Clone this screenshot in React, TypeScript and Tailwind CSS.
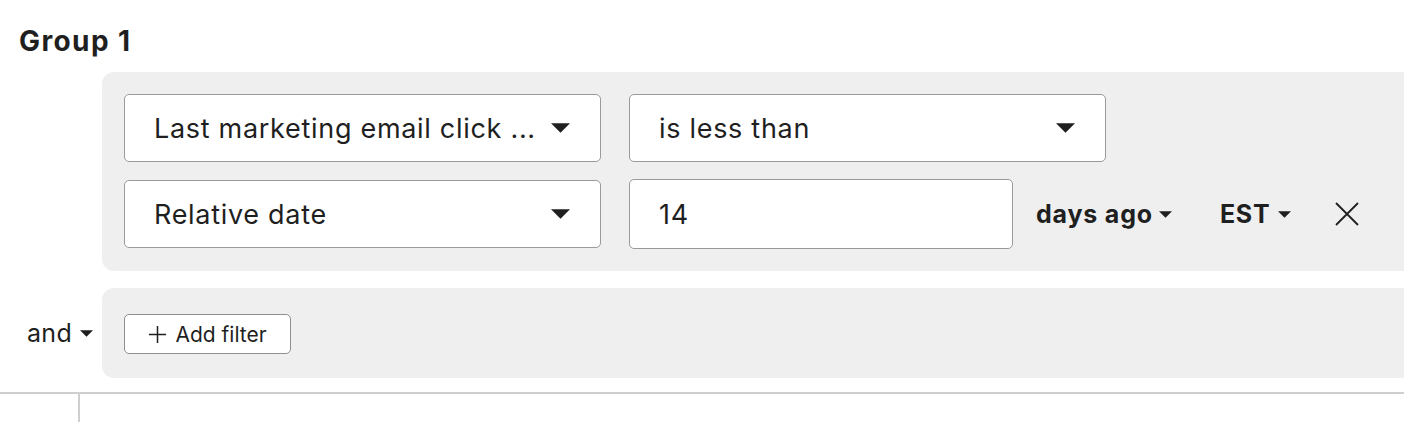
import React from "react";

const font = { fontFamily: "Inter, 'Noto Sans', sans-serif" };

function Caret({ className = "" }: { className?: string }) {
  return (
    <svg viewBox="0 0 20 10" className={className} aria-hidden>
      <path d="M0 0 L20 0 L10 10 Z" fill="currentColor" />
    </svg>
  );
}

function Select({ label, width }: { label: string; width: string }) {
  return (
    <div
      className={`${width} h-[68px] flex items-center justify-between rounded-[5px] border border-[#9a9a9a] bg-white pl-[29px] pr-[30px]`}
    >
      <span className="text-[27px] tracking-[0.7px] text-[#1f1f1f] leading-none">{label}</span>
      <Caret className="w-[19px] h-[10px] text-[#1f1f1f]" />
    </div>
  );
}

export default function App() {
  return (
    <div className="w-[1404px] h-[422px] bg-white overflow-hidden text-[#1f1f1f]" style={font}>
      <div className="pl-[19px] pt-[25px] h-[72px]">
        <h2 className="text-[28px] font-bold leading-[32px] tracking-[1.4px]">Group 1</h2>
      </div>
      <div className="flex">
        <div className="w-[102px] shrink-0" />
        <div className="flex-1 bg-[#efefef] rounded-l-[12px] pl-[22px] pt-[22px] pb-[22px] flex flex-col gap-[17px]">
          <div className="flex gap-[28px]">
            <Select label="Last marketing email click ..." width="w-[477px]" />
            <Select label="is less than" width="w-[477px]" />
          </div>
          <div className="flex items-center">
            <Select label="Relative date" width="w-[477px]" />
            <div className="ml-[28px] w-[384px] h-[70px] flex items-center rounded-[5px] border border-[#9a9a9a] bg-white pl-[29px]">
              <span className="text-[27px] tracking-[0.7px] leading-none">14</span>
            </div>
            <div className="ml-[23px] flex items-center gap-[6px]">
              <span className="text-[25px] font-bold tracking-[0.8px] leading-none">days ago</span>
              <Caret className="w-[13px] h-[7px]" />
            </div>
            <div className="ml-[48px] flex items-center gap-[7px]">
              <span className="text-[25px] font-bold tracking-[0.8px] leading-none">EST</span>
              <Caret className="w-[13px] h-[7px]" />
            </div>
            <svg viewBox="0 0 24 24" className="ml-[44px] w-[24px] h-[24px]" aria-hidden>
              <path d="M1 1 L23 23 M23 1 L1 23" stroke="#1f1f1f" strokeWidth="1.8" fill="none" />
            </svg>
          </div>
        </div>
      </div>
      <div className="flex mt-[17px]">
        <div className="w-[102px] shrink-0 flex items-center pl-[27px] gap-[8px]">
          <span className="text-[25px] tracking-[0.3px] leading-none">and</span>
          <Caret className="w-[13px] h-[7px]" />
        </div>
        <div className="flex-1 h-[90px] bg-[#efefef] rounded-l-[12px] pl-[22px] pt-[26px]">
          <button className="h-[40px] w-[167px] flex items-center justify-center gap-[8px] rounded-[5px] border border-[#8f8f8f] bg-white">
            <svg viewBox="0 0 20 20" className="w-[19px] h-[19px]" aria-hidden>
              <path d="M10 1 V19 M1 10 H19" stroke="#1f1f1f" strokeWidth="1.6" fill="none" />
            </svg>
            <span className="text-[21px] leading-none">Add filter</span>
          </button>
        </div>
      </div>
      <div className="mt-[14px] border-t-2 border-[#cfcfcf] flex">
        <div className="ml-[78px] w-[2px] h-[30px] bg-[#cfcfcf]" />
      </div>
    </div>
  );
}
